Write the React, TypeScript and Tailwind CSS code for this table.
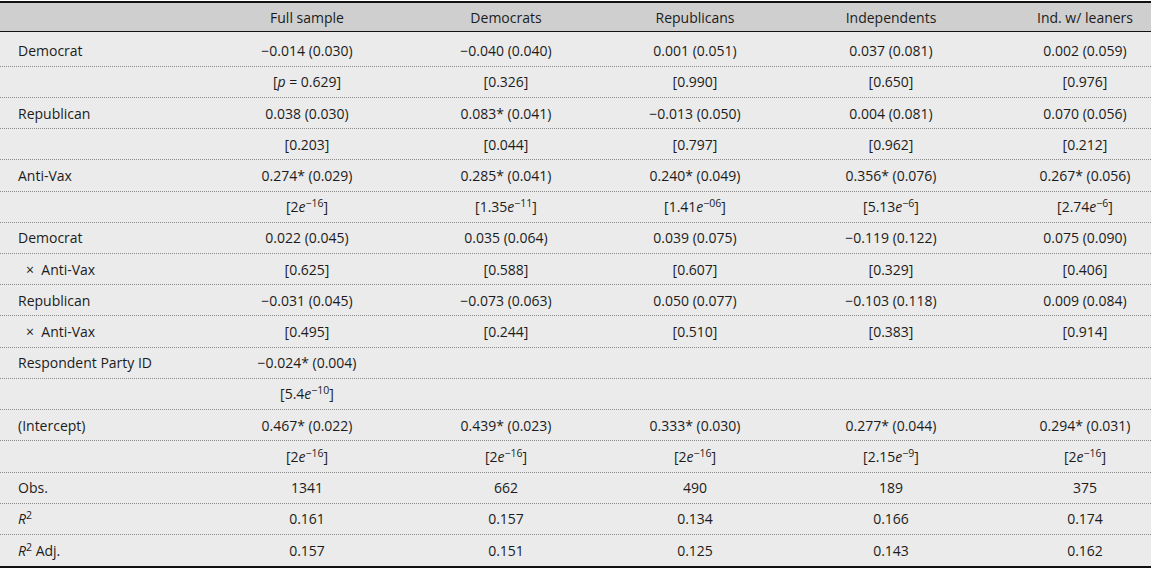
import React from "react";

const cols = "grid grid-cols-[208px_198px_200px_178px_214px_153px]";

const S = (m: string, e: string) => (
  <>
    [{m}
    <i>e</i>
    <sup>{e}</sup>]
  </>
);

type Cell = React.ReactNode;
type Row = { label: Cell; vals: Cell[] };

const rows: Row[] = [
  { label: "Democrat", vals: ["−0.014 (0.030)", "−0.040 (0.040)", "0.001 (0.051)", "0.037 (0.081)", "0.002 (0.059)"] },
  {
    label: "",
    vals: [
      <>
        [<i>p</i> = 0.629]
      </>,
      "[0.326]",
      "[0.990]",
      "[0.650]",
      "[0.976]",
    ],
  },
  { label: "Republican", vals: ["0.038 (0.030)", "0.083* (0.041)", "−0.013 (0.050)", "0.004 (0.081)", "0.070 (0.056)"] },
  { label: "", vals: ["[0.203]", "[0.044]", "[0.797]", "[0.962]", "[0.212]"] },
  { label: "Anti-Vax", vals: ["0.274* (0.029)", "0.285* (0.041)", "0.240* (0.049)", "0.356* (0.076)", "0.267* (0.056)"] },
  { label: "", vals: [S("2", "−16"), S("1.35", "−11"), S("1.41", "−06"), S("5.13", "−6"), S("2.74", "−6")] },
  { label: "Democrat", vals: ["0.022 (0.045)", "0.035 (0.064)", "0.039 (0.075)", "−0.119 (0.122)", "0.075 (0.090)"] },
  { label: <span className="pl-[8px]">×&nbsp;&nbsp;Anti-Vax</span>, vals: ["[0.625]", "[0.588]", "[0.607]", "[0.329]", "[0.406]"] },
  { label: "Republican", vals: ["−0.031 (0.045)", "−0.073 (0.063)", "0.050 (0.077)", "−0.103 (0.118)", "0.009 (0.084)"] },
  { label: <span className="pl-[8px]">×&nbsp;&nbsp;Anti-Vax</span>, vals: ["[0.495]", "[0.244]", "[0.510]", "[0.383]", "[0.914]"] },
  { label: "Respondent Party ID", vals: ["−0.024* (0.004)", "", "", "", ""] },
  { label: "", vals: [S("5.4", "−10"), "", "", "", ""] },
  { label: "(Intercept)", vals: ["0.467* (0.022)", "0.439* (0.023)", "0.333* (0.030)", "0.277* (0.044)", "0.294* (0.031)"] },
  { label: "", vals: [S("2", "−16"), S("2", "−16"), S("2", "−16"), S("2.15", "−9"), S("2", "−16")] },
  { label: "Obs.", vals: ["1341", "662", "490", "189", "375"] },
  {
    label: (
      <>
        <i>R</i>
        <sup>2</sup>
      </>
    ),
    vals: ["0.161", "0.157", "0.134", "0.166", "0.174"],
  },
  {
    label: (
      <>
        <i>R</i>
        <sup>2</sup> Adj.
      </>
    ),
    vals: ["0.157", "0.151", "0.125", "0.143", "0.162"],
  },
];

const headers = ["Full sample", "Democrats", "Republicans", "Independents", "Ind. w/ leaners"];

export default function App() {
  return (
    <div className="w-[1155px] h-[571px] bg-white pt-[1px] font-['Open_Sans',sans-serif] text-[14px] text-[#1c1c1c]">
      <div className="w-[1151px] border-t-2 border-b-2 border-[#111]">
        <div className={`${cols} h-[29px] items-center bg-[#cfcfcf] border-b border-[#111]`}>
          <div />
          {headers.map((h, i) => (
            <div key={h} className={i === 4 ? "text-center pl-[21px]" : "text-center"}>
              {h}
            </div>
          ))}
        </div>
        <div className="bg-[#ebebeb]">
          {rows.map((r, ri) => (
            <div
              key={ri}
              className={`${cols} items-center ${ri === 0 ? "h-[34.7px] pt-[4px]" : "h-[31.22px]"} ${
                ri < rows.length - 1 ? "border-b border-dotted border-[#8a8a8a]" : ""
              }`}
            >
              <div className="pl-[18px] whitespace-nowrap">{r.label}</div>
              {r.vals.map((v, i) => (
                <div key={i} className={`text-center whitespace-nowrap ${i === 4 ? "pl-[21px]" : ""}`}>
                  {v}
                </div>
              ))}
            </div>
          ))}
        </div>
      </div>
    </div>
  );
}
